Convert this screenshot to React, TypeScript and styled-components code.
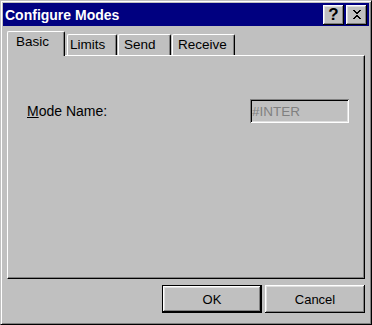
import React from "react";
import styled, { createGlobalStyle } from "styled-components";

const GlobalStyle = createGlobalStyle`
  html, body {
    margin: 0;
    padding: 0;
    background: #c0c0c0;
  }
  body {
    font-family: "Liberation Sans", Arial, sans-serif;
  }
`;

const raised = `
  box-shadow: inset -1px -1px #000000, inset 1px 1px #ffffff,
    inset -2px -2px #808080, inset 2px 2px #dfdfdf;
`;

type TabItem = {
  label: string;
  width: number;
  inset: number;
};

const tabs: TabItem[] = [
  { label: "Basic", width: 58, inset: 8 },
  { label: "Limits", width: 50, inset: 2 },
  { label: "Send", width: 53, inset: 5 },
  { label: "Receive", width: 63, inset: 5 },
];

export default function App() {
  return (
    <>
      <GlobalStyle />
      <Window>
        <TitleBar>
          <Title>Configure Modes</Title>
          <TitleButtons>
            <TitleButton>
              <Question>?</Question>
            </TitleButton>
            <TitleButton>
              <svg width="10" height="9" viewBox="0 0 10 9" shapeRendering="crispEdges">
                <path d="M1 0h2v1h1v1h2V1h1V0h2v1h-1v1h-1v1h-1v1h-1v1h1v1h1v1h1v1h1v1H7V8H6V7H4v1H3v1H1V8h1V7h1V6h1V5h1V4H4V3H3V2H2V1H1z" fill="#000" />
              </svg>
            </TitleButton>
          </TitleButtons>
        </TitleBar>
        <Body>
          <TabStrip>
            {tabs.map((t, i) => (
              <Tab key={t.label} $active={i === 0} $width={t.width} $inset={t.inset}>
                {t.label}
              </Tab>
            ))}
          </TabStrip>
          <Panel>
            <FieldRow>
              <Label>
                <Accel>M</Accel>ode Name:
              </Label>
              <TextBox value="#INTER" disabled readOnly />
            </FieldRow>
          </Panel>
          <ButtonRow>
            <PushButton $default>OK</PushButton>
            <PushButton>Cancel</PushButton>
          </ButtonRow>
        </Body>
      </Window>
    </>
  );
}

const Window = styled.div`
  width: 372px;
  height: 325px;
  box-sizing: border-box;
  background: #c0c0c0;
  border: 1px solid;
  border-color: #c0c0c0 #000000 #000000 #c0c0c0;
  box-shadow: inset 1px 1px #ffffff, inset -1px -1px #808080;
  padding: 2px;
  display: flex;
  flex-direction: column;
`;

const TitleBar = styled.div`
  height: 23px;
  background: #000080;
  display: flex;
  align-items: center;
  justify-content: space-between;
  padding: 0 2px 0 2px;
`;

const Title = styled.div`
  color: #ffffff;
  font-weight: 700;
  font-size: 14px;
  line-height: 16px;
`;

const TitleButtons = styled.div`
  display: flex;
  gap: 2px;
`;

const TitleButton = styled.div`
  width: 21px;
  height: 20px;
  box-sizing: border-box;
  background: #c0c0c0;
  ${raised}
  display: flex;
  align-items: center;
  justify-content: center;
`;

const Question = styled.span`
  font-weight: 700;
  font-size: 17px;
  line-height: 17px;
  color: #000000;
`;

const Body = styled.div`
  flex: 1;
  display: flex;
  flex-direction: column;
  padding: 6px 4px 9px 4px;
  min-height: 0;
`;

const TabStrip = styled.div`
  display: flex;
  align-items: flex-end;
  gap: 1px;
  height: 23px;
  position: relative;
  z-index: 1;
`;

const Tab = styled.div<{ $active?: boolean; $width: number; $inset: number }>`
  box-sizing: border-box;
  width: ${(p) => p.$width}px;
  height: ${(p) => (p.$active ? 25 : 21)}px;
  margin-bottom: ${(p) => (p.$active ? -1 : 0)}px;
  margin-right: ${(p) => (p.$active ? 1 : 0)}px;
  padding: 2px 0 0 ${(p) => p.$inset}px;
  background: #c0c0c0;
  border-top: 1px solid #ffffff;
  border-left: 1px solid #ffffff;
  border-right: 1px solid #000000;
  border-radius: 2px 2px 0 0;
  box-shadow: inset -1px 0 #808080;
  font-size: 13.5px;
  line-height: 15px;
  color: #000000;
`;

const Panel = styled.div`
  flex: 1;
  box-sizing: border-box;
  background: #c0c0c0;
  border: 1px solid;
  border-color: #ffffff #000000 #000000 #ffffff;
  box-shadow: inset -1px -1px #808080;
  padding: 43px 15px 0 19px;
`;

const FieldRow = styled.div`
  display: flex;
  align-items: center;
  justify-content: space-between;
`;

const Label = styled.div`
  font-size: 14px;
  line-height: 16px;
  color: #000000;
`;

const Accel = styled.span`
  text-decoration: underline;
`;

const TextBox = styled.input`
  width: 99px;
  height: 24px;
  box-sizing: border-box;
  margin: 0;
  border: none;
  outline: none;
  background: #c0c0c0;
  box-shadow: inset 1px 1px #808080, inset -1px -1px #ffffff,
    inset 2px 2px #000000, inset -2px -2px #dfdfdf;
  padding: 0 0 0 2px;
  font-family: "Liberation Sans", Arial, sans-serif;
  font-size: 13.5px;
  color: #808080;
  -webkit-text-fill-color: #808080;
  opacity: 1;
`;

const ButtonRow = styled.div`
  display: flex;
  justify-content: flex-end;
  gap: 3px;
  margin-top: 6px;
`;

const PushButton = styled.button<{ $default?: boolean }>`
  width: 100px;
  height: 28px;
  box-sizing: border-box;
  margin: 0;
  background: #c0c0c0;
  font-family: "Liberation Sans", Arial, sans-serif;
  font-size: 13px;
  color: #000000;
  padding: 0;
  border: ${(p) => (p.$default ? "1px solid #000000" : "none")};
  ${raised}
`;
